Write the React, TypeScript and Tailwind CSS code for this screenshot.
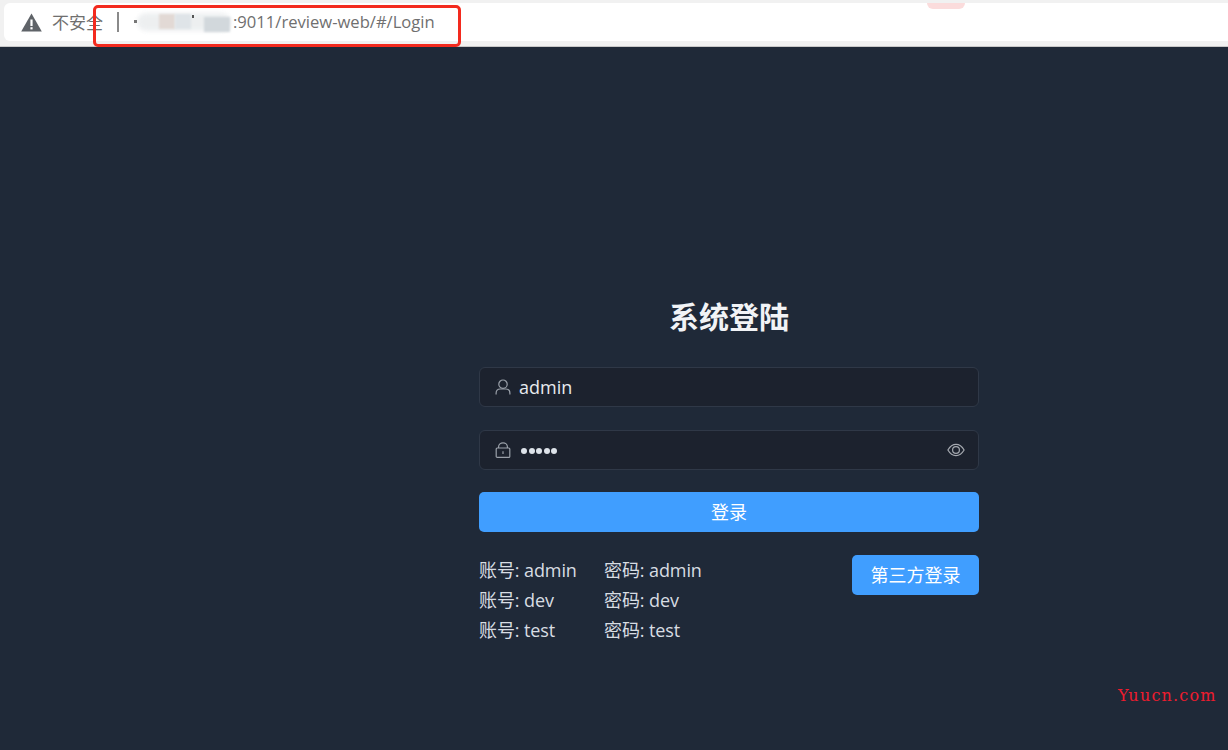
import React from 'react'

const CJK = "font-['Open_Sans','Noto_Sans_CJK_SC',sans-serif]"

const ACCOUNTS = [
  { user: 'admin', pass: 'admin' },
  { user: 'dev', pass: 'dev' },
  { user: 'test', pass: 'test' },
]

const UserIcon = () => (
  <svg width="16" height="16" viewBox="0 0 16 16" fill="none" stroke="currentColor" strokeWidth="1.2">
    <circle cx="8" cy="5.2" r="4.2" />
    <path d="M1.1 15.5 V14.2 C1.1 11.6 3 10 5.2 10 H10.8 C13 10 14.9 11.6 14.9 14.2 V15.5" />
  </svg>
)

const LockIcon = () => (
  <svg width="16" height="16" viewBox="0 0 16 16" fill="none" stroke="currentColor" strokeWidth="1.2">
    <path d="M3.6 6 V4.8 C3.6 2.4 5.6 0.8 8 0.8 C10.4 0.8 12.4 2.4 12.4 4.8 V6" />
    <rect x="1.2" y="6" width="13.6" height="9.4" rx="1" />
    <path d="M8 9.2 V12" />
  </svg>
)

const EyeIcon = () => (
  <svg width="18" height="14" viewBox="0 0 18 14" fill="none" stroke="#a5a9b0" strokeWidth="1.2">
    <path d="M0.9 7 C3 3.4 5.8 1.4 9 1.4 C12.2 1.4 15 3.4 17.1 7 C15 10.6 12.2 12.6 9 12.6 C5.8 12.6 3 10.6 0.9 7 Z" />
    <circle cx="9" cy="7" r="3.4" />
  </svg>
)

const AddressBar: React.FC = () => (
  <div className="relative h-[47px] bg-[#f1f1f1] pt-[3px] border-b border-[#c8c8c8]">
    <div className="flex h-[38px] w-full items-center rounded-l-md bg-white pl-[17px] ml-[4px] text-[#6f6f6f]">
      <svg width="21" height="19" viewBox="0 0 21 19" className="shrink-0">
        <path d="M10.5 0.5 L20.8 18.6 H0.2 Z" fill="#5f6368" />
        <rect x="9.4" y="6.5" width="2.2" height="6.5" fill="#fff" />
        <rect x="9.4" y="14.2" width="2.2" height="2.2" fill="#fff" />
      </svg>
      <span className="ml-[10px] w-[53px] text-[17px] leading-none whitespace-nowrap">不安全</span>
      <span className="ml-[12px] h-[20px] w-[2px] bg-[#8a8a8a]" />
      <span className="ml-[114px] text-[16.6px] whitespace-nowrap">:9011/review-web/#/Login</span>
    </div>
    {/* blurred out host */}
    <div className="absolute left-[137px] top-[13px] h-[18px] w-[94px] rounded-full bg-[#e6e9eb] opacity-70 blur-[2px]" />
    <div className="absolute left-[159px] top-[14px] h-[15px] w-[16px] bg-[#e2d9d5] blur-[1px]" />
    <div className="absolute left-[175px] top-[14px] h-[15px] w-[16px] bg-[#dfe4e8] blur-[1px]" />
    <div className="absolute left-[204px] top-[17px] h-[15px] w-[26px] bg-[#d2d8dc] blur-[1px]" />
    <div className="absolute left-[134px] top-[20px] h-[3px] w-[3px] bg-[#777]" />
    <div className="absolute left-[192px] top-[15px] h-[3px] w-[2px] bg-[#555]" />
    {/* annotation */}
    <div className="absolute left-[93px] top-[5px] h-[42px] w-[368px] rounded-[5px] border-[3px] border-[#f32a1e]" />
    <div className="absolute left-[927px] top-[3px] h-[6px] w-[38px] rounded-b-md bg-[#fbdcdc]" />
  </div>
)

const Field: React.FC<{ icon: React.ReactNode; trailing?: React.ReactNode; children: React.ReactNode }> = ({ icon, trailing, children }) => (
  <div className="flex h-[40px] items-center rounded-[6px] border border-[#2f3847] bg-[#1c222e] pl-[15px] pr-[13px]">
    <span className="flex w-[16px] justify-center text-[#9aa0a9]">{icon}</span>
    <span className="ml-[8px] flex-1 text-[18px] text-[#e8ebef]">{children}</span>
    {trailing}
  </div>
)

const App: React.FC = () => (
  <div className={`${CJK} relative h-[750px] w-[1228px] overflow-hidden bg-[#1f2938]`}>
    <AddressBar />

    <div className="ml-[479px] w-[500px] pt-[252px]">
      <h1 className="text-center text-[30px] font-bold leading-[36px] text-[#f1f3f6]">系统登陆</h1>

      <div className="mt-[32px]">
        <Field icon={<UserIcon />}>admin</Field>
      </div>
      <div className="mt-[23px]">
        <Field icon={<LockIcon />} trailing={<EyeIcon />}>
          <span className="flex gap-[1.5px] pl-[2px] pt-[2px]">
            {[0, 1, 2, 3, 4].map((i) => (
              <span key={i} className="h-[6px] w-[6px] rounded-full bg-[#dde3ea]" />
            ))}
          </span>
        </Field>
      </div>

      <button className="mt-[22px] block h-[40px] w-full rounded-[5px] bg-[#409eff] text-[18px] text-white">登录</button>

      <div className="mt-[23px] flex items-start justify-between">
        <div className="grid grid-cols-[125px_auto] text-[18px] leading-[30px] tracking-[-0.1px] text-[#d8dde3]">
          {ACCOUNTS.map((a) => (
            <React.Fragment key={a.user}>
              <span>账号: {a.user}</span>
              <span>密码: {a.pass}</span>
            </React.Fragment>
          ))}
        </div>
        <button className="h-[40px] w-[127px] rounded-[5px] bg-[#409eff] text-[18px] text-white">第三方登录</button>
      </div>
    </div>

    <span className="absolute left-[1118px] top-[686px] font-['DejaVu_Serif',serif] text-[16px] leading-[20px] tracking-[1.2px] text-[#ee1c2e]">Yuucn.com</span>
  </div>
)

export default App
